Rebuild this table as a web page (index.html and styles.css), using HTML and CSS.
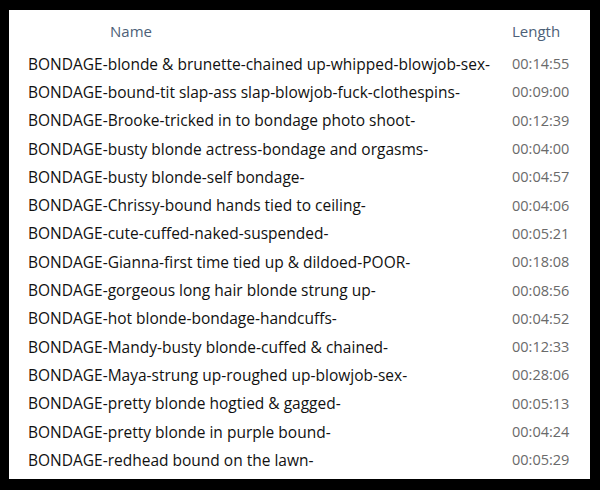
FILE: index.html
```html
<!DOCTYPE html>
<html>
<head>
<meta charset="utf-8">
<link rel="stylesheet" href="styles.css">
</head>
<body>
<div class="panel">
  <div class="row header">
    <span class="name">Name</span>
    <span class="len">Length</span>
  </div>
  <div class="row"><span class="name">BONDAGE-blonde &amp; brunette-chained up-whipped-blowjob-sex-</span><span class="len">00:14:55</span></div>
  <div class="row"><span class="name">BONDAGE-bound-tit slap-ass slap-blowjob-fuck-clothespins-</span><span class="len">00:09:00</span></div>
  <div class="row"><span class="name">BONDAGE-Brooke-tricked in to bondage photo shoot-</span><span class="len">00:12:39</span></div>
  <div class="row"><span class="name">BONDAGE-busty blonde actress-bondage and orgasms-</span><span class="len">00:04:00</span></div>
  <div class="row"><span class="name">BONDAGE-busty blonde-self bondage-</span><span class="len">00:04:57</span></div>
  <div class="row"><span class="name">BONDAGE-Chrissy-bound hands tied to ceiling-</span><span class="len">00:04:06</span></div>
  <div class="row"><span class="name">BONDAGE-cute-cuffed-naked-suspended-</span><span class="len">00:05:21</span></div>
  <div class="row"><span class="name">BONDAGE-Gianna-first time tied up &amp; dildoed-POOR-</span><span class="len">00:18:08</span></div>
  <div class="row"><span class="name">BONDAGE-gorgeous long hair blonde strung up-</span><span class="len">00:08:56</span></div>
  <div class="row"><span class="name">BONDAGE-hot blonde-bondage-handcuffs-</span><span class="len">00:04:52</span></div>
  <div class="row"><span class="name">BONDAGE-Mandy-busty blonde-cuffed &amp; chained-</span><span class="len">00:12:33</span></div>
  <div class="row"><span class="name">BONDAGE-Maya-strung up-roughed up-blowjob-sex-</span><span class="len">00:28:06</span></div>
  <div class="row"><span class="name">BONDAGE-pretty blonde hogtied &amp; gagged-</span><span class="len">00:05:13</span></div>
  <div class="row"><span class="name">BONDAGE-pretty blonde in purple bound-</span><span class="len">00:04:24</span></div>
  <div class="row"><span class="name">BONDAGE-redhead bound on the lawn-</span><span class="len">00:05:29</span></div>
</div>
</body>
</html>
```
FILE: styles.css
```css
html, body {
  margin: 0;
  padding: 0;
  background: #000;
  width: 600px;
  height: 490px;
  overflow: hidden;
}
.panel {
  margin: 10px 10px 0 9px;
  width: 581px;
  height: 469px;
  box-sizing: border-box;
  background: #fff;
  padding: 5px 0 0 19px;
  font-family: "Open Sans", "Noto Sans", sans-serif;
  font-size: 15.5px;
}
.row {
  display: flex;
  height: 28.3px;
  align-items: center;
  white-space: nowrap;
}
.header {
  height: 34.5px;
  align-items: flex-start;
  padding-top: 6px;
  box-sizing: border-box;
  font-size: 15px;
}
.name {
  width: 484px;
  color: #111;
}
.len {
  color: #6a6a6a;
  font-size: 14.5px;
}
.header .name {
  padding-left: 82px;
  box-sizing: border-box;
  color: #4d5f78;
}
.header .len {
  color: #4d5f78;
  font-size: 15px;
}
```
